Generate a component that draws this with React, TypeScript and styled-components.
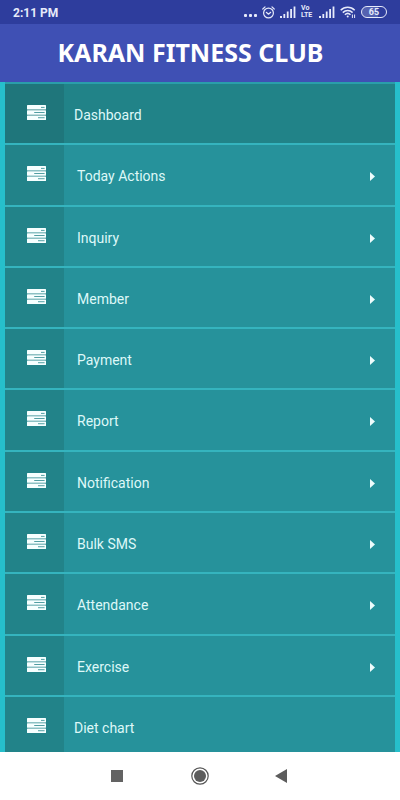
import React from 'react';
import styled, { createGlobalStyle } from 'styled-components';

const GlobalStyle = createGlobalStyle`
  * { box-sizing: border-box; }
  body {
    margin: 0;
    background: #26bfcb;
    font-family: Roboto, "Liberation Sans", sans-serif;
  }
`;

const Screen = styled.div`
  display: flex;
  flex-direction: column;
  min-height: 100vh;
`;

const StatusBar = styled.div`
  display: flex;
  align-items: center;
  justify-content: space-between;
  height: 24px;
  padding: 0 13px;
  background: #2e3d9d;
  color: #e6eafa;
`;

const Clock = styled.time`
  padding-top: 2px;
  font-size: 12px;
  font-weight: 700;
  line-height: 16px;
`;

const StatusIcons = styled.div`
  display: flex;
  align-items: center;
  gap: 5px;

  svg { display: block; }
`;

const Volte = styled.span`
  display: flex;
  flex-direction: column;
  width: 13px;
  font-size: 7px;
  font-weight: 700;
  line-height: 7px;
`;

const Battery = styled.span`
  display: flex;
  align-items: center;
  justify-content: center;
  width: 26px;
  height: 12px;
  border: 1px solid #e6eafa;
  border-radius: 6px;
  background: linear-gradient(90deg, #5562b1 68%, #2e3d9d 68%);
  font-size: 9px;
  font-weight: 700;
  line-height: 10px;
`;

const Header = styled.header`
  display: flex;
  align-items: center;
  justify-content: center;
  height: 58px;
  padding: 0 19px 2px 0;
  background: #3f50b4;
`;

const Title = styled.h1`
  margin: 0;
  color: #fff;
  font-family: "Noto Sans", "Open Sans", sans-serif;
  font-size: 25px;
  font-weight: 700;
  line-height: 32px;
  white-space: nowrap;
`;

const Menu = styled.nav`
  display: flex;
  flex: 1;
  padding: 0 5px;
  background: #26bfcb;
`;

const MenuList = styled.ul`
  display: grid;
  flex: 1;
  grid-template-rows: repeat(10, minmax(58px, 1fr)) 55px;
  gap: 2px;
  margin: 0;
  padding: 0;
  border-top: 2px solid #2a9eaa;
  background: #35b4be;
  list-style: none;
`;

const MenuItem = styled.li`
  display: flex;
`;

const MenuButton = styled.button<{ $active?: boolean }>`
  display: flex;
  flex: 1;
  align-items: stretch;
  padding: 0;
  border: 0;
  background: ${(p) => (p.$active ? '#218388' : '#26929b')};
  color: #def8f8;
  font-family: inherit;
  font-size: 14px;
  line-height: 20px;
  text-align: left;
  cursor: pointer;
`;

const IconCell = styled.span<{ $active?: boolean }>`
  width: 59px;
  padding: 21px 0 0 22px;
  background: ${(p) => (p.$active ? '#1f767b' : '#228389')};

  svg { display: block; }
`;

const Label = styled.span<{ $nested?: boolean }>`
  flex: 1;
  padding: 21px 0 0 ${(p) => (p.$nested ? 13 : 10)}px;
`;

const Arrow = styled.span`
  padding: 27px 20px 0 0;

  svg { display: block; }
`;

const NavBar = styled.footer`
  display: flex;
  align-items: center;
  justify-content: center;
  gap: 64px;
  height: 48px;
  background: #fff;
`;

const NavButton = styled.button`
  display: flex;
  padding: 0;
  border: 0;
  background: none;
  cursor: pointer;
`;

const TasksIcon = () => (
  <svg width="19" height="15" viewBox="0 0 19 15" aria-hidden="true">
    <g fill="#f6ffff">
      <rect y="0" width="19" height="4.4" rx=".5" />
      <rect y="5.3" width="19" height="4.4" rx=".5" />
      <rect y="10.6" width="19" height="4.4" rx=".5" />
    </g>
    <g fill="#3f9499">
      <rect x="14" y="1.9" width="3.6" height=".9" />
      <rect x="7.2" y="7.1" width="10.4" height=".9" />
      <rect x="11" y="12.3" width="6.6" height=".9" />
    </g>
  </svg>
);

const DotsIcon = () => (
  <svg width="14" height="12" viewBox="0 0 14 12" fill="currentColor" aria-hidden="true">
    <rect x="1" y="8" width="3" height="3" rx="1" />
    <rect x="6" y="8" width="3" height="3" rx="1" />
    <rect x="11" y="8" width="3" height="3" rx="1" />
  </svg>
);

const AlarmIcon = () => (
  <svg width="13" height="13" viewBox="0 0 13 13" fill="none" stroke="currentColor" strokeWidth="1.2" strokeLinecap="round" strokeLinejoin="round" aria-hidden="true">
    <circle cx="6.5" cy="7" r="4.9" />
    <path d="M.8 3 3 .9M12.2 3 10 .9M4.3 6.3l2.2 1.9 2.2-1.9" />
  </svg>
);

const SignalIcon = () => (
  <svg width="16" height="12" viewBox="0 0 16 12" fill="currentColor" aria-hidden="true">
    <rect x="0" y="10" width="2" height="2" />
    <rect x="3.4" y="8" width="1.8" height="4" />
    <rect x="6.8" y="5.5" width="1.8" height="6.5" />
    <rect x="10.2" y="3" width="1.8" height="9" />
    <rect x="13.6" y="0.5" width="1.8" height="11.5" />
  </svg>
);

const WifiIcon = () => (
  <svg width="16" height="12" viewBox="0 0 16 12" fill="none" stroke="currentColor" strokeWidth="1.5" aria-hidden="true">
    <path d="M.7 4.3c3.9-4 10.1-4 14 0M2.8 6.6c2.8-2.8 7-2.8 9.8 0M4.9 8.8c1.6-1.6 4-1.6 5.6 0" />
    <circle cx="7.7" cy="10.5" r="1" fill="currentColor" stroke="none" />
    <path d="M12.4 8.5V12M14.6 8.5V12" strokeWidth="1" />
  </svg>
);

const CaretIcon = () => (
  <svg width="5" height="9" viewBox="0 0 5 9" fill="#eefcfc" aria-hidden="true">
    <path d="M0 0 5 4.5 0 9z" />
  </svg>
);

interface Entry {
  label: string;
  nested?: boolean;
  active?: boolean;
}

const entries: Entry[] = [
  { label: 'Dashboard', active: true },
  { label: 'Today Actions', nested: true },
  { label: 'Inquiry', nested: true },
  { label: 'Member', nested: true },
  { label: 'Payment', nested: true },
  { label: 'Report', nested: true },
  { label: 'Notification', nested: true },
  { label: 'Bulk SMS', nested: true },
  { label: 'Attendance', nested: true },
  { label: 'Exercise', nested: true },
  { label: 'Diet chart' },
];

export default function App() {
  return (
    <Screen>
      <GlobalStyle />
      <StatusBar>
        <Clock>2:11 PM</Clock>
        <StatusIcons>
          <DotsIcon />
          <AlarmIcon />
          <SignalIcon />
          <Volte>
            <span>Vo</span>
            <span>LTE</span>
          </Volte>
          <SignalIcon />
          <WifiIcon />
          <Battery>65</Battery>
        </StatusIcons>
      </StatusBar>
      <Header>
        <Title>KARAN FITNESS CLUB</Title>
      </Header>
      <Menu aria-label="Main">
        <MenuList>
          {entries.map(({ label, nested, active }) => (
            <MenuItem key={label}>
              <MenuButton type="button" $active={active} aria-current={active ? 'page' : undefined}>
                <IconCell $active={active}>
                  <TasksIcon />
                </IconCell>
                <Label $nested={nested}>{label}</Label>
                {nested && (
                  <Arrow>
                    <CaretIcon />
                  </Arrow>
                )}
              </MenuButton>
            </MenuItem>
          ))}
        </MenuList>
      </Menu>
      <NavBar>
        <NavButton type="button" aria-label="Recent apps">
          <svg width="18" height="18" viewBox="0 0 18 18" fill="#636363">
            <rect x="2" y="3" width="12" height="12" />
          </svg>
        </NavButton>
        <NavButton type="button" aria-label="Home">
          <svg width="18" height="18" viewBox="0 0 18 18">
            <circle cx="9" cy="9" r="8.2" fill="none" stroke="#555" strokeWidth="1.2" />
            <circle cx="9" cy="9" r="6" fill="#5c5c5c" />
          </svg>
        </NavButton>
        <NavButton type="button" aria-label="Back">
          <svg width="18" height="18" viewBox="0 0 18 18" fill="#5c5c5c">
            <path d="M2 9 14 2v14z" />
          </svg>
        </NavButton>
      </NavBar>
    </Screen>
  );
}
